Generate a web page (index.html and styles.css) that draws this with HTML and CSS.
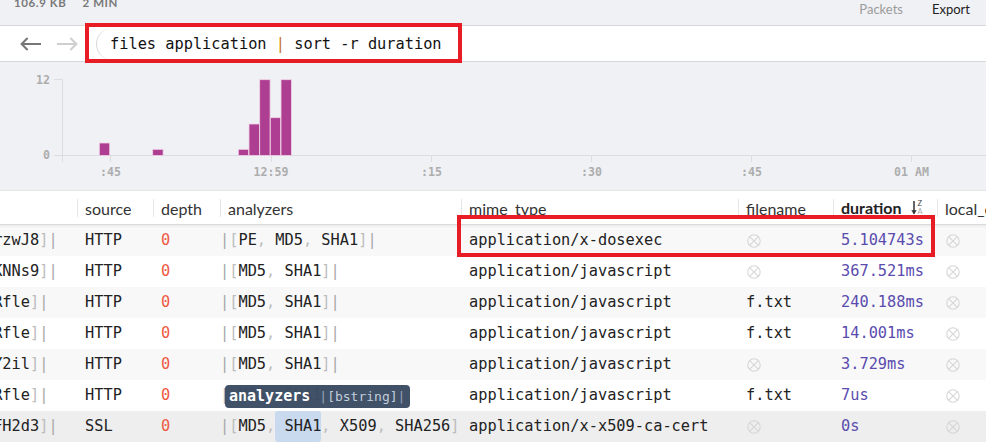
FILE: index.html
```html
<!DOCTYPE html>
<html>
<head>
<meta charset="utf-8">
<title>Brim</title>
<link rel="stylesheet" href="styles.css">
</head>
<body>
<div class="app">
  <header class="topbar">
    <div class="stats"><span>106.9 KB</span><span>2 MIN</span></div>
    <nav class="tabs"><span class="tab muted">Packets</span><span class="tab">Export</span></nav>
  </header>

  <div class="searchbar">
    <svg class="nav-arrow back" width="22" height="14" viewBox="0 0 22 14"><path d="M21 7H1.8M7.6 1L1.6 7l6 6"/></svg>
    <svg class="nav-arrow fwd" width="22" height="14" viewBox="0 0 22 14"><path d="M1 7h19.2M14.4 1l6 6-6 6"/></svg>
    <div class="query">files application <span class="pipe">|</span> sort -r duration</div>
  </div>

  <div class="chart">
    <svg class="hist" width="986" height="128" viewBox="0 0 986 128">
      <g class="axis">
        <path d="M62.5 17.5V100"/>
        <path d="M54 17.5H62.5"/>
        <path d="M54 93.5H986"/>
        <path d="M110.5 93.5V100M271.5 93.5V100M431.5 93.5V100M591.5 93.5V100M751.5 93.5V100M911.5 93.5V100"/>
      </g>
      <g class="bars">
        <rect x="99.3" y="81" width="10.4" height="12.5"/>
        <rect x="152.7" y="87.3" width="10.4" height="6.2"/>
        <rect x="238.3" y="87.3" width="10.4" height="6.2"/>
        <rect x="249" y="62" width="10.4" height="31.5"/>
        <rect x="259.7" y="17.7" width="10.4" height="75.8"/>
        <rect x="270.3" y="55.7" width="10.4" height="37.8"/>
        <rect x="281" y="17.7" width="10.4" height="75.8"/>
      </g>
      <g class="labels">
        <text x="50" y="21.7" class="end">12</text>
        <text x="50" y="97.3" class="end">0</text>
        <text x="110.5" y="113.7" class="mid">:45</text>
        <text x="271" y="113.7" class="mid">12:59</text>
        <text x="431.5" y="113.7" class="mid">:15</text>
        <text x="591.5" y="113.7" class="mid">:30</text>
        <text x="751.5" y="113.7" class="mid">:45</text>
        <text x="911.5" y="113.7" class="mid">01 AM</text>
      </g>
    </svg>
  </div>

  <div class="table">
    <div class="grid">
      <div class="row head">
        <div class="hcell">conn_uids</div>
        <div class="hcell">source</div>
        <div class="hcell">depth</div>
        <div class="hcell">analyzers</div>
        <div class="hcell">mime_type</div>
        <div class="hcell">filename</div>
        <div class="hcell sorted">duration<span class="sort"><svg class="sort-arrow" width="6" height="15" viewBox="0 0 6 15"><path d="M3 1V13.5"/><path class="head" d="M0.3 10.2L3 14.5L5.7 10.2Z"/></svg><span class="za"><span class="z">Z</span><span class="a">A</span></span></span></div>
        <div class="hcell">local_orig</div>
      </div>

      <div class="row stripe">
        <div class="cell mono"><span class="bar">|</span><span class="p">[</span>CJXzWq3oN3kQBrzwJ8<span class="p">]</span><span class="bar">|</span></div>
        <div class="cell mono">HTTP</div>
        <div class="cell mono zero">0</div>
        <div class="cell mono set"><span class="bar">|</span><span class="p">[</span>PE<span class="p">,</span> MD5<span class="p">,</span> SHA1<span class="p">]</span><span class="bar">|</span></div>
        <div class="cell mono">application/x-dosexec</div>
        <div class="cell nullcell"><svg class="null" viewBox="0 0 14 14"><circle cx="7" cy="7" r="6.2"/><path d="M2.6 2.6L11.4 11.4M11.4 2.6L2.6 11.4"/></svg></div>
        <div class="cell mono dur">5.104743s</div>
        <div class="cell nullcell"><svg class="null" viewBox="0 0 14 14"><circle cx="7" cy="7" r="6.2"/><path d="M2.6 2.6L11.4 11.4M11.4 2.6L2.6 11.4"/></svg></div>
      </div>

      <div class="row">
        <div class="cell mono"><span class="bar">|</span><span class="p">[</span>CpM6e91nbOjxKKNNs9<span class="p">]</span><span class="bar">|</span></div>
        <div class="cell mono">HTTP</div>
        <div class="cell mono zero">0</div>
        <div class="cell mono set"><span class="bar">|</span><span class="p">[</span>MD5<span class="p">,</span> SHA1<span class="p">]</span><span class="bar">|</span></div>
        <div class="cell mono">application/javascript</div>
        <div class="cell nullcell"><svg class="null" viewBox="0 0 14 14"><circle cx="7" cy="7" r="6.2"/><path d="M2.6 2.6L11.4 11.4M11.4 2.6L2.6 11.4"/></svg></div>
        <div class="cell mono dur">367.521ms</div>
        <div class="cell nullcell"><svg class="null" viewBox="0 0 14 14"><circle cx="7" cy="7" r="6.2"/><path d="M2.6 2.6L11.4 11.4M11.4 2.6L2.6 11.4"/></svg></div>
      </div>

      <div class="row stripe">
        <div class="cell mono"><span class="bar">|</span><span class="p">[</span>CxvBIz1gdRL7nRfle<span class="p">]</span><span class="bar">|</span></div>
        <div class="cell mono">HTTP</div>
        <div class="cell mono zero">0</div>
        <div class="cell mono set"><span class="bar">|</span><span class="p">[</span>MD5<span class="p">,</span> SHA1<span class="p">]</span><span class="bar">|</span></div>
        <div class="cell mono">application/javascript</div>
        <div class="cell mono">f.txt</div>
        <div class="cell mono dur">240.188ms</div>
        <div class="cell nullcell"><svg class="null" viewBox="0 0 14 14"><circle cx="7" cy="7" r="6.2"/><path d="M2.6 2.6L11.4 11.4M11.4 2.6L2.6 11.4"/></svg></div>
      </div>

      <div class="row">
        <div class="cell mono"><span class="bar">|</span><span class="p">[</span>CxvBIz1gdRL7nRfle<span class="p">]</span><span class="bar">|</span></div>
        <div class="cell mono">HTTP</div>
        <div class="cell mono zero">0</div>
        <div class="cell mono set"><span class="bar">|</span><span class="p">[</span>MD5<span class="p">,</span> SHA1<span class="p">]</span><span class="bar">|</span></div>
        <div class="cell mono">application/javascript</div>
        <div class="cell mono">f.txt</div>
        <div class="cell mono dur">14.001ms</div>
        <div class="cell nullcell"><svg class="null" viewBox="0 0 14 14"><circle cx="7" cy="7" r="6.2"/><path d="M2.6 2.6L11.4 11.4M11.4 2.6L2.6 11.4"/></svg></div>
      </div>

      <div class="row stripe">
        <div class="cell mono"><span class="bar">|</span><span class="p">[</span>CgoaIt2ZqSw5fY2il<span class="p">]</span><span class="bar">|</span></div>
        <div class="cell mono">HTTP</div>
        <div class="cell mono zero">0</div>
        <div class="cell mono set"><span class="bar">|</span><span class="p">[</span>MD5<span class="p">,</span> SHA1<span class="p">]</span><span class="bar">|</span></div>
        <div class="cell mono">application/javascript</div>
        <div class="cell nullcell"><svg class="null" viewBox="0 0 14 14"><circle cx="7" cy="7" r="6.2"/><path d="M2.6 2.6L11.4 11.4M11.4 2.6L2.6 11.4"/></svg></div>
        <div class="cell mono dur">3.729ms</div>
        <div class="cell nullcell"><svg class="null" viewBox="0 0 14 14"><circle cx="7" cy="7" r="6.2"/><path d="M2.6 2.6L11.4 11.4M11.4 2.6L2.6 11.4"/></svg></div>
      </div>

      <div class="row">
        <div class="cell mono"><span class="bar">|</span><span class="p">[</span>CxvBIz1gdRL7nRfle<span class="p">]</span><span class="bar">|</span></div>
        <div class="cell mono">HTTP</div>
        <div class="cell mono zero">0</div>
        <div class="cell mono set has-tip"><span class="bar">|</span><span class="p">[</span>MD5<span class="p">,</span> SHA1<span class="p">]</span><span class="bar">|</span><div class="tooltip"><b class="tt-name">analyzers</b> <span class="tt-type"><span class="tt-bar">|</span>[bstring]<span class="tt-bar">|</span></span></div></div>
        <div class="cell mono">application/javascript</div>
        <div class="cell mono">f.txt</div>
        <div class="cell mono dur">7us</div>
        <div class="cell nullcell"><svg class="null" viewBox="0 0 14 14"><circle cx="7" cy="7" r="6.2"/><path d="M2.6 2.6L11.4 11.4M11.4 2.6L2.6 11.4"/></svg></div>
      </div>

      <div class="row hover">
        <div class="cell mono"><span class="bar">|</span><span class="p">[</span>CbT8Dl1M2nvAmFH2d3<span class="p">]</span><span class="bar">|</span></div>
        <div class="cell mono">SSL</div>
        <div class="cell mono zero">0</div>
        <div class="cell mono set"><span class="bar">|</span><span class="p">[</span>MD5<span class="p">,</span><span class="hl"> SHA1</span><span class="p">,</span> X509<span class="p">,</span> SHA256<span class="p">]</span><span class="bar">|</span></div>
        <div class="cell mono">application/x-x509-ca-cert</div>
        <div class="cell nullcell"><svg class="null" viewBox="0 0 14 14"><circle cx="7" cy="7" r="6.2"/><path d="M2.6 2.6L11.4 11.4M11.4 2.6L2.6 11.4"/></svg></div>
        <div class="cell mono dur">0s</div>
        <div class="cell nullcell"><svg class="null" viewBox="0 0 14 14"><circle cx="7" cy="7" r="6.2"/><path d="M2.6 2.6L11.4 11.4M11.4 2.6L2.6 11.4"/></svg></div>
      </div>
    </div>
  </div>

  <div class="annot annot-search"></div>
  <div class="annot annot-row"></div>
</div>
</body>
</html>
```

FILE: styles.css
```css
* { box-sizing: border-box; }

html, body {
  margin: 0;
  padding: 0;
}

body {
  width: 986px;
  height: 445px;
  overflow: hidden;
  background: #ffffff;
  font-family: Lato, "Noto Sans", sans-serif;
  color: #222;
}

.app {
  position: relative;
  height: 445px;
  overflow: hidden;
}

/* ---------- top bar ---------- */
.topbar {
  height: 26px;
  background: #f0f1f5;
  border-bottom: 1px solid #d6d7db;
  display: flex;
  justify-content: space-between;
  align-items: flex-start;
  padding: 0 16px 0 14px;
}

.stats {
  display: flex;
  gap: 16px;
  margin-top: -4px;
  font-size: 11.5px;
  line-height: 14px;
  font-weight: 700;
  letter-spacing: 0.6px;
  color: #7a7a7a;
}

.tabs {
  display: flex;
  gap: 29px;
  margin-top: 1px;
  font-size: 13px;
  line-height: 16px;
}

.tab { color: #222; }
.tab.muted { color: #9b9b9b; }

/* ---------- search bar ---------- */
.searchbar {
  height: 36px;
  background: #ffffff;
  border-bottom: 1px solid #d6d7db;
  display: flex;
  align-items: center;
  padding-left: 20px;
}

.nav-arrow {
  display: block;
  fill: none;
  stroke-width: 2;
  stroke-linecap: butt;
  stroke-linejoin: miter;
}
.nav-arrow.back { stroke: #777777; }
.nav-arrow.fwd { stroke: #cfcfcf; margin-left: 14px; }

.query {
  margin-left: 18px;
  flex: 1;
  height: 32px;
  border-left: 1px solid #d9d9d9;
  border-radius: 16px 0 0 16px;
  padding-left: 13px;
  font-family: "DejaVu Sans Mono", monospace;
  font-size: 15.3px;
  line-height: 32px;
  color: #111;
  white-space: pre;
}

.pipe { color: #c67a1c; }

/* ---------- histogram ---------- */
.chart {
  height: 128px;
  background: #f0f1f5;
}

.hist { display: block; }

.axis path {
  fill: none;
  stroke: #dcdde1;
  stroke-width: 1;
}

.bars rect {
  fill: #ad3e92;
  stroke: #efd3e6;
  stroke-width: 0.8;
}

.labels text {
  font-family: "DejaVu Sans Mono", monospace;
  font-size: 11.6px;
  font-weight: 700;
  fill: #adadad;
}
.labels .end { text-anchor: end; }
.labels .mid { text-anchor: middle; }

/* ---------- table ---------- */
.table {
  overflow: hidden;
  width: 986px;
}

.grid {
  margin-left: -153px;
  width: 1210px;
}

.row {
  display: grid;
  grid-template-columns: 230px 76px 67px 241px 277px 95px 104px 120px;
  height: 31px;
  background: #ffffff;
}

.row.stripe { background: #f8f8f9; }
.row.hover { background: #eeeeee; }

.row.head {
  height: 35px;
  background: #ffffff;
  border-top: 1px solid #e6e6e8;
  border-bottom: 1px solid #dadada;
  box-shadow: 0 1px 3px rgba(0, 0, 0, 0.07);
  position: relative;
  z-index: 1;
}

.hcell {
  position: relative;
  padding: 2px 0 0 8px;
  font-size: 16px;
  line-height: 31px;
  color: #333;
  white-space: nowrap;
  overflow: hidden;
}

.hcell::before {
  content: "";
  position: absolute;
  left: -1px;
  top: 8px;
  width: 2px;
  height: 18px;
  background: #e6e6e6;
}

.hcell.sorted {
  font-weight: 700;
  color: #222;
  display: flex;
  align-items: center;
  padding-top: 0;
}

.sort {
  display: inline-flex;
  align-items: center;
  margin-left: 9px;
  gap: 1px;
}

.sort-arrow {
  display: block;
  fill: none;
  stroke: #333;
  stroke-width: 1.5;
}
.sort-arrow .head { fill: #333; stroke: none; }

.za {
  display: flex;
  flex-direction: column;
  font-size: 7.5px;
  line-height: 7.5px;
  font-weight: 400;
}
.za .z { color: #444; }
.za .a { color: #a8a8a8; }

.cell {
  padding-left: 8px;
  white-space: nowrap;
  overflow: hidden;
  line-height: 31px;
}

.mono {
  font-family: "DejaVu Sans Mono", monospace;
  font-size: 15.3px;
  color: #222;
}

.cell.set { padding-left: 0; position: relative; }

.bar { color: #a9a9a9; }
.p { color: #bdbdbd; }

.zero { color: #ee5840; }
.dur { color: #5a4cae; }

.nullcell {
  display: flex;
  align-items: center;
  padding-left: 9px;
}

.null {
  width: 14px;
  height: 14px;
  fill: none;
  stroke: #d6d6d6;
  stroke-width: 1.1;
}

.hl {
  display: inline-block;
  white-space: pre;
  background: #c9d9ee;
  border-radius: 3px;
  line-height: 31px;
  height: 31px;
  vertical-align: top;
}

/* tooltip over the analyzers cell */
.tooltip {
  position: absolute;
  left: 5px;
  top: 5px;
  height: 23px;
  padding: 0 5px 0 4px;
  background: rgba(61, 78, 101, 0.98);
  border-radius: 4px;
  line-height: 23px;
  white-space: pre;
  font-family: "DejaVu Sans Mono", monospace;
  font-size: 15px;
}
.tt-name { color: #ffffff; font-weight: 700; }
.tt-type { font-size: 13px; color: #c2cddc; }
.tt-bar { color: #95a3b8; }

/* ---------- red annotation boxes ---------- */
.annot {
  position: absolute;
  border: 4.6px solid #e81c24;
  pointer-events: none;
  z-index: 5;
}
.annot-search { left: 85px; top: 23px; width: 377px; height: 40px; }
.annot-row { left: 457px; top: 215px; width: 478px; height: 42px; }
```
